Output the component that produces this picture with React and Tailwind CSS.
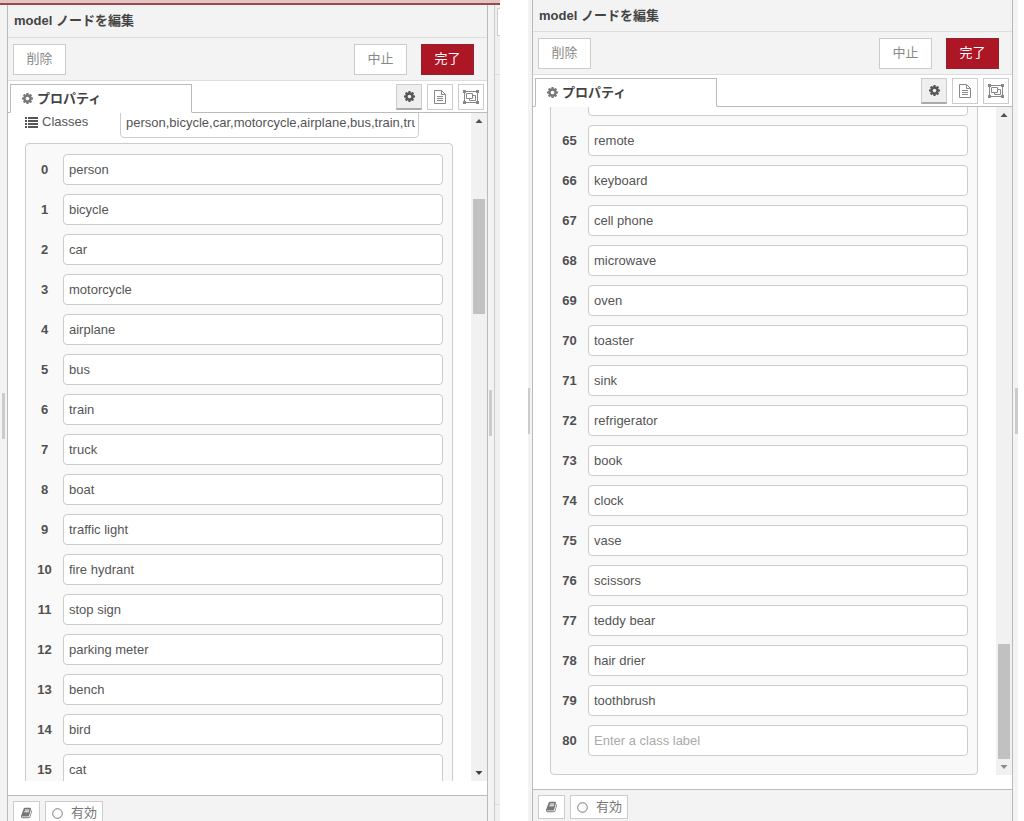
import React from "react";

const firstClasses = [
  "person",
  "bicycle",
  "car",
  "motorcycle",
  "airplane",
  "bus",
  "train",
  "truck",
  "boat",
  "traffic light",
  "fire hydrant",
  "stop sign",
  "parking meter",
  "bench",
  "bird",
  "cat",
];

const lastClasses = [
  "remote",
  "keyboard",
  "cell phone",
  "microwave",
  "oven",
  "toaster",
  "sink",
  "refrigerator",
  "book",
  "clock",
  "vase",
  "scissors",
  "teddy bear",
  "hair drier",
  "toothbrush",
  "",
];

const CogIcon = ({ className }) => (
  <svg viewBox="0 128 1536 1536" fill="currentColor" className={className}>
    <path d="M1024 896q0-106-75-181t-181-75-181 75-75 181 75 181 181 75 181-75 75-181zm512-109v222q0 12-8 23t-20 13l-185 28q-19 54-39 91 35 50 107 138 10 12 10 25t-9 23q-27 37-99 108t-94 71q-12 0-26-9l-138-108q-44 23-91 38-16 136-29 186-7 28-36 28h-222q-14 0-24.500-8.500t-11.500-21.500l-28-184q-49-16-90-37l-141 107q-10 9-25 9-14 0-25-11-126-114-165-168-7-10-7-23 0-12 8-23 15-21 51-66.500t54-70.500q-27-50-41-99l-183-27q-13-2-21-12.500t-8-23.500v-222q0-12 8-23t19-13l186-28q14-46 39-92-40-57-107-138-10-12-10-24 0-10 9-23 26-36 98.500-107.500t94.500-71.500q13 0 26 10l138 107q44-23 91-38 16-136 29-186 7-28 36-28h222q14 0 24.500 8.500t11.500 21.500l28 184q49 16 90 37l142-107q9-9 24-9 13 0 25 10 129 119 165 170 7 8 7 22 0 12-8 23-15 21-51 66.500t-54 70.500q26 50 41 98l183 28q13 2 21 12.500t8 23.500z" />
  </svg>
);

const FileIcon = () => (
  <svg viewBox="0 0 12 14" fill="none" stroke="currentColor" className="h-[14px] w-3">
    <path d="M.5.5h7l4 4v9H.5zM7.500.5v4h4M3 6.500h6M3 8.500h6M3 10.500h6" />
  </svg>
);

const GroupIcon = () => (
  <svg viewBox="0 0 16 14" fill="none" stroke="currentColor" className="h-[14px] w-4">
    <path d="M2 1.500h12M2 12.500h12M1.500 2v10M14.500 2v10" />
    <path d="M3.500 3.500h6v5h-6zM9.500 5.500h3v5h-6v-2" />
    <path
      fill="currentColor"
      stroke="none"
      d="M0 0h3v3H0zM13 0h3v3h-3zM0 11h3v3H0zM13 11h3v3h-3z"
    />
  </svg>
);

const ListIcon = () => (
  <svg viewBox="0 0 13 11" fill="currentColor" className="h-[11px] w-[13px]">
    <path d="M0 0h2v2H0zM3 0h10v2H3zM0 3h2v2H0zM3 3h10v2H3zM0 6h2v2H0zM3 6h10v2H3zM0 9h2v2H0zM3 9h10v2H3z" />
  </svg>
);

const BookIcon = () => (
  <svg viewBox="0 0 1792 1792" fill="currentColor" className="h-3 w-3">
    <path d="M1639 478q40 57 18 129l-275 906q-19 64-76.500 107.500t-122.500 43.500h-923q-77 0-148.500-53.500t-99.500-131.500q-24-67-2-127 0-4 3-27t4-37q1-8-3-21.500t-3-19.500q2-11 8-21t16.500-23.500 16.500-23.500q23-38 45-91.500t30-91.500q3-10 .5-30t-.5-28q3-11 17-28t17-23q21-36 42-92t25-90q1-9-2.500-32t.5-28q4-13 22-30.500t22-22.500q19-26 42.500-84.500t27.500-96.500q1-8-3-25.500t-2-26.500q2-8 9-18t18-23 17-21q8-12 16.500-30.500t15-35 16-36 19.500-32 26.500-23.500 36-11.500 47.500 5.500l-1 3q38-9 51-9h761q74 0 114 56t18 130l-274 906q-36 119-71.500 153.500t-128.500 34.500h-869q-27 0-38 15-11 16-1 43 24 70 144 70h923q29 0 56-15.500t35-41.500l300-987q7-22 5-57 38 15 59 43zm-1064 2q-4 13 2 22.500t20 9.500h608q13 0 25.500-9.500t16.500-22.500l21-64q4-13-2-22.500t-20-9.500h-608q-13 0-25.500 9.500t-16.500 22.500zm-83 256q-4 13 2 22.500t20 9.500h608q13 0 25.500-9.500t16.500-22.500l21-64q4-13-2-22.500t-20-9.500h-608q-13 0-25.500 9.500t-16.500 22.500z" />
  </svg>
);

const Scrollbar = ({ atEnd }) => (
  <div className="flex w-4 shrink-0 flex-col items-center bg-[#f1f1f1]">
    <svg viewBox="0 0 16 16" fill="#505050" className="h-4 w-4 shrink-0">
      <path d="M4.500 10h7L8 6z" />
    </svg>
    <div
      className={
        atEnd
          ? "flex min-h-0 flex-1 flex-col justify-end"
          : "min-h-0 flex-1 pt-[70px]"
      }
    >
      <div className="h-[115px] w-3 bg-[#c1c1c1]" />
    </div>
    <svg
      viewBox="0 0 16 16"
      fill={atEnd ? "#8a8a8a" : "#404040"}
      className="h-4 w-4 shrink-0"
    >
      <path d="M4.500 6h7L8 10z" />
    </svg>
  </div>
);

const ClassRow = ({ index, value }) => (
  <div className="flex h-[31px] shrink-0 items-center">
    <label
      htmlFor={`class-${index}`}
      className="w-[37px] text-center font-bold text-[#505050]"
    >
      {index}
    </label>
    <input
      id={`class-${index}`}
      type="text"
      defaultValue={value}
      placeholder="Enter a class label"
      className="h-[31px] min-w-0 flex-1 rounded-[4px] border border-[#ccc] bg-white px-[5px] outline-none placeholder:text-[#aaa]"
    />
  </div>
);

const EditPanel = ({ start, classes, summary, atEnd, titleClass, footerClass }) => (
  <section className="flex min-w-0 flex-1 flex-col border-x border-[#bbb] bg-white">
    <h2 className={titleClass}>model ノードを編集</h2>

    {/* Actions */}
    <div className="flex h-[43px] shrink-0 items-center border-b border-[#ddd] bg-[#f3f3f3] pl-[5px] pr-[13px] text-[#888]">
      <button type="button" className="h-[31px] w-[53px] border border-[#ccc] bg-white">
        削除
      </button>
      <div className="ml-auto flex gap-[14px]">
        <button type="button" className="h-[31px] w-[53px] border border-[#ccc] bg-white">
          中止
        </button>
        <button
          type="button"
          className="h-[31px] w-[53px] border border-[#8f2430] bg-[#ad1625] text-white"
        >
          完了
        </button>
      </div>
    </div>

    {/* Tabs */}
    <div className="flex h-8 shrink-0 items-end border-b border-[#bbb] pl-[2px] pr-[3px] text-[#888]">
      <button
        type="button"
        className="-mb-px flex h-[29px] w-[182px] items-center gap-1 border border-b-white border-[#bbb] bg-white pl-[11px] font-bold"
      >
        <CogIcon className="h-[11px] w-[11px] text-[#777]" />
        <span className="text-[#444]">プロパティ</span>
      </button>
      <div className="mb-[2px] ml-auto flex gap-[5px]">
        <button
          type="button"
          aria-label="properties"
          className="flex h-[26px] w-[26px] items-center justify-center border border-b-2 border-[#ccc] border-b-[#aaa] bg-[#efefef] text-[#555]"
        >
          <CogIcon className="h-[11px] w-[11px]" />
        </button>
        <button
          type="button"
          aria-label="description"
          className="flex h-[26px] w-[26px] items-center justify-center border border-[#ccc] bg-white"
        >
          <FileIcon />
        </button>
        <button
          type="button"
          aria-label="appearance"
          className="flex h-[26px] w-[26px] items-center justify-center border border-[#ccc] bg-white"
        >
          <GroupIcon />
        </button>
      </div>
    </div>

    {/* Class list */}
    <div className="flex min-h-0 flex-1">
      <div
        className={
          atEnd
            ? "flex min-w-0 flex-1 flex-col justify-end overflow-hidden pl-[17px] pr-[18px]"
            : "flex min-w-0 flex-1 flex-col overflow-hidden pl-[17px] pr-[18px]"
        }
      >
        {summary && (
          <div className="mb-[5px] flex h-[25px] shrink-0 items-end pr-[34px]">
            <label
              htmlFor="classes"
              className="flex w-[95px] items-center gap-1 self-start"
            >
              <ListIcon />
              Classes
            </label>
            <input
              id="classes"
              type="text"
              defaultValue={summary}
              className="h-[31px] min-w-0 flex-1 rounded-[4px] border border-[#ccc] bg-white pl-[5px] pr-[3px] outline-none"
            />
          </div>
        )}
        <div className="flex shrink-0 flex-col gap-[9px] rounded-[4px] border border-[#ccc] bg-[#f9f9f9] pb-[18px] pr-[9px] pt-[10px]">
          {/* Row scrolled under the tab bar */}
          {atEnd && (
            <div className="flex h-[31px] shrink-0 pl-[37px]">
              <input
                type="text"
                aria-label="64"
                className="min-w-0 flex-1 rounded-[4px] border border-[#ccc] bg-white"
              />
            </div>
          )}
          {classes.map((name, i) => (
            <ClassRow key={start + i} index={start + i} value={name} />
          ))}
        </div>
      </div>
      <Scrollbar atEnd={atEnd} />
    </div>

    {/* Footer */}
    <div className="h-[14px] shrink-0" />
    <div className={footerClass}>
      <button
        type="button"
        aria-label="help"
        className="flex h-6 w-[27px] shrink-0 items-center justify-center border border-[#ccc] bg-white"
      >
        <BookIcon />
      </button>
      <button
        type="button"
        className="flex h-6 w-[58px] shrink-0 items-center gap-2 border border-[#ccc] bg-white pl-[6px]"
      >
        <svg viewBox="0 0 11 11" fill="none" stroke="currentColor" className="h-[11px] w-[11px]">
          <circle cx="5.500" cy="5.500" r="4.800" />
        </svg>
        有効
      </button>
    </div>
  </section>
);

const App = () => {
  return (
    <main className="grid h-screen grid-cols-[500fr_490fr] gap-7 overflow-hidden bg-white pr-[6px] font-['Liberation_Sans','Noto_Sans_CJK_JP',sans-serif] text-[13px] leading-[18px] text-[#555]">
      <div className="flex min-h-0 min-w-0 flex-col">
        <div className="h-[5px] shrink-0 border-b-2 border-[#9b4a4c] bg-[#e3c3c4]" />
        <div className="flex min-h-0 flex-1">
          <div className="flex w-[7px] shrink-0 items-center bg-[#f3f3f3] pl-[2px] pt-[6px]">
            <div className="h-[46px] w-[3px] bg-[#ccc]" />
          </div>
          <EditPanel
            start={0}
            classes={firstClasses}
            summary="person,bicycle,car,motorcycle,airplane,bus,train,truck,boat"
            titleClass="flex h-[33px] shrink-0 items-center border-b border-[#ddd] bg-[#f3f3f3] px-[6px] font-bold text-[#444]"
            footerClass="flex h-[26px] shrink-0 items-start gap-[5px] overflow-hidden border-t border-[#bbb] bg-[#f3f3f3] pl-[5px] pt-[5px] text-[#777]"
          />
          <div className="flex w-[6px] shrink-0 items-center bg-[#f3f3f3] pl-px">
            <div className="h-[46px] w-[3px] bg-[#ccc]" />
          </div>
          {/* Edge of the workspace */}
          <div className="flex w-[6px] shrink-0 flex-col border-l border-[#ccc] bg-[#f0f0f0]">
            <div className="ml-[2px] mt-[3px] h-7 rounded-tl-[2px] border border-r-0 border-[#ccc] bg-white" />
            <div className="mt-[38px] flex-1 border-y border-[#ddd]" />
            <div className="h-4" />
          </div>
        </div>
      </div>

      <div className="flex min-h-0 min-w-0">
        <div className="flex w-1 shrink-0 items-center bg-[#f3f3f3]">
          <div className="h-[46px] w-[2px] bg-[#ccc]" />
        </div>
        <EditPanel
          start={65}
          classes={lastClasses}
          atEnd
          titleClass="flex h-8 shrink-0 items-center border-b border-[#ddd] bg-[#f3f3f3] px-[6px] font-bold text-[#444]"
          footerClass="flex h-8 shrink-0 items-start gap-[5px] border-t border-[#bbb] bg-[#f3f3f3] pl-[5px] pt-[5px] text-[#777]"
        />
        <div className="flex w-[5px] shrink-0 items-center bg-[#f3f3f3] pl-[2px]">
          <div className="h-[46px] w-[3px] bg-[#ccc]" />
        </div>
      </div>
    </main>
  );
};

export default App;
